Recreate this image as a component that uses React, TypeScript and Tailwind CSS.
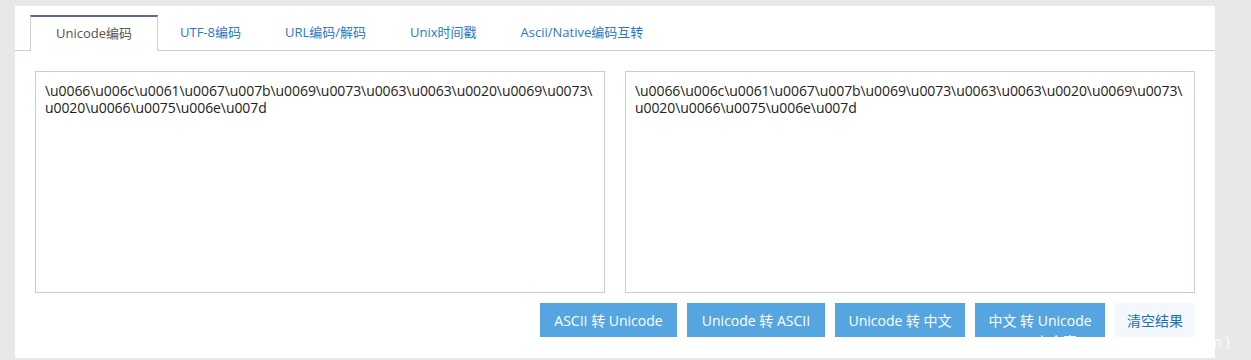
import { useState } from "react"

const tabs = ["Unicode编码", "UTF-8编码", "URL编码/解码", "Unix时间戳", "Ascii/Native编码互转"]

const lines = [
  "\\u0066\\u006c\\u0061\\u0067\\u007b\\u0069\\u0073\\u0063\\u0063\\u0020\\u0069\\u0073\\",
  "u0020\\u0066\\u0075\\u006e\\u007d",
]

const font = { fontFamily: '"Open Sans", "Noto Sans CJK SC", sans-serif' }

function Box() {
  return (
    <div className="h-[222px] w-[570px] border border-[#c9ccd9] bg-white px-[9px] pt-[10px] text-[14px] leading-[17px] tracking-[-0.08px] text-[#222]">
      {lines.map((l) => (
        <div key={l} className="whitespace-pre">
          {l}
        </div>
      ))}
    </div>
  )
}

export default function App() {
  const [active, setActive] = useState(0)

  return (
    <div className="relative h-[360px] w-[1251px] overflow-hidden bg-[#e8e8e8] pt-[6px] pl-[15px]" style={font}>
      <div className="h-[352px] w-[1200px] bg-white">

        {/* tabs */}
        <div className="flex h-[45px] items-end border-b border-[#c8cfdf] pl-[15px]">
          {tabs.map((t, i) =>
            i === active ? (
              <button
                key={t}
                onClick={() => setActive(i)}
                className="-mb-px h-[36px] w-[128px] border-t-2 border-x border-t-[#5b6a86] border-x-[#c8cfdf] bg-white text-[13px] text-[#555]"
              >
                {t}
              </button>
            ) : (
              <button
                key={t}
                onClick={() => setActive(i)}
                className="h-[35px] px-[22px] text-[13px] text-[#2a78c6]"
              >
                {t}
              </button>
            )
          )}
        </div>

        {/* textareas */}
        <div className="flex gap-[20px] pl-[20px] pt-[20px]">
          <Box />
          <Box />
        </div>

        {/* buttons */}
        <div className="flex justify-end gap-[10px] pr-[20px] pt-[10px] text-[14px]">
          <button className="h-[34px] w-[137px] bg-[#55a6e0] text-white">ASCII 转 Unicode</button>
          <button className="h-[34px] w-[138px] bg-[#55a6e0] text-white">Unicode 转 ASCII</button>
          <button className="h-[34px] w-[130px] bg-[#55a6e0] text-white">Unicode 转 中文</button>
          <button className="h-[34px] w-[130px] bg-[#55a6e0] text-white">中文 转 Unicode</button>
          <button className="h-[34px] w-[80px] bg-[#f4f8fc] text-[#1f6fb5]">清空结果</button>
        </div>
      </div>

      {/* watermark */}
      <div className="absolute left-[1035px] top-[331px] whitespace-nowrap text-[14px] text-white/90">
        安全客 ( www.anquanke.com )
      </div>
    </div>
  )
}
